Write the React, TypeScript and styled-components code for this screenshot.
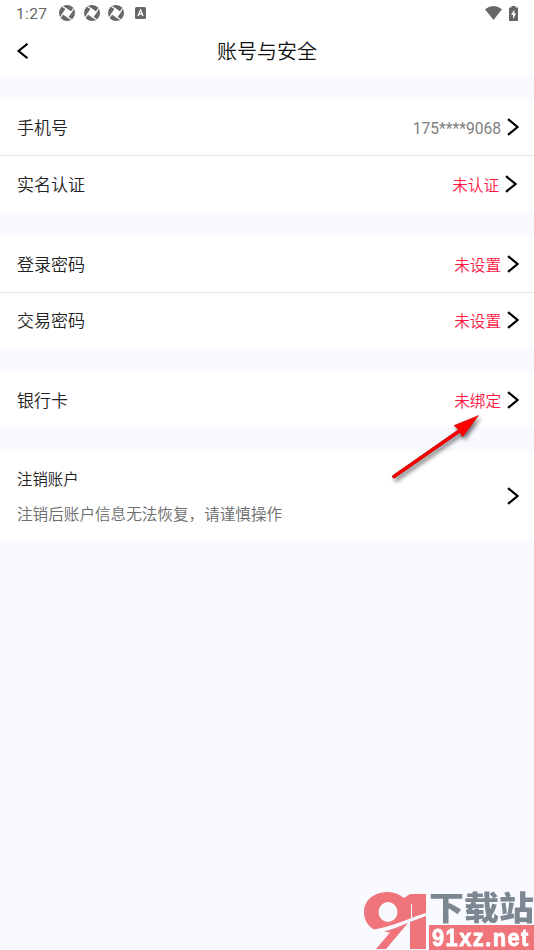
import React from 'react';
import styled, { createGlobalStyle } from 'styled-components';

const GlobalStyle = createGlobalStyle`
  * { box-sizing: border-box; }
  body { margin: 0; background: #f8faff; }
`;

const Screen = styled.div`
  position: relative;
  display: flex;
  flex-direction: column;
  gap: 24px;
  width: 534px;
  height: 950px;
  overflow: hidden;
  background: #f8faff;
  font-family: Roboto, 'Noto Sans CJK SC', sans-serif;
  font-weight: 350;
`;

const Top = styled.header`
  height: 76px;
  margin-bottom: -1px;
  background: #fff;
`;

const StatusBar = styled.div`
  display: flex;
  align-items: center;
  justify-content: space-between;
  height: 27px;
  padding: 0 16px 1px 16px;
  color: #666;
`;

const StatusGroup = styled.div<{ $gap: number }>`
  display: flex;
  align-items: center;
  gap: ${(p) => p.$gap}px;
`;

const Clock = styled.span`
  width: 34.5px;
  padding-top: 2px;
  font-size: 15.5px;
  font-weight: 400;
  letter-spacing: 0.35px;
  line-height: 25px;
`;

const TitleBar = styled.div`
  display: grid;
  grid-template-columns: 48px 1fr 48px;
  align-items: center;
  height: 48px;
`;

const BackButton = styled.button`
  display: flex;
  padding: 0 0 0 16px;
  border: 0;
  background: none;
`;

const Title = styled.h1`
  margin: 0;
  padding-top: 2px;
  color: #111;
  font-size: 20px;
  font-weight: 350;
  line-height: 30px;
  text-align: center;
`;

const Group = styled.section`
  background: #fff;
`;

const Row = styled.div<{ $height: number; $divided?: boolean; $inset?: number }>`
  display: flex;
  align-items: center;
  height: ${(p) => p.$height}px;
  padding: 0 ${(p) => p.$inset ?? 15}px 0 17px;
  border-bottom: ${(p) => (p.$divided ? '1px solid #e4e4e4' : '0')};
`;

const Label = styled.span`
  flex: 1;
  padding-top: 2px;
  color: #222;
  font-size: 17px;
  line-height: 26px;
`;

const Value = styled.span<{ $alert?: boolean }>`
  margin-right: 6px;
  padding-top: 4px;
  color: ${(p) => (p.$alert ? '#ff1744' : '#808080')};
  font-size: 15.6px;
  font-weight: ${(p) => (p.$alert ? 350 : 400)};
  line-height: 24px;
`;

const CloseRow = styled.section`
  display: flex;
  align-items: center;
  height: 89px;
  padding: 0 15px 0 17px;
  background: #fff;
`;

const CloseText = styled.div`
  flex: 1;
  display: flex;
  flex-direction: column;
  gap: 11px;
  padding-top: 4px;
`;

const CloseTitle = styled.span`
  color: #222;
  font-size: 15.4px;
  line-height: 24px;
`;

const CloseHint = styled.span`
  color: #6c6c6c;
  font-size: 15.6px;
  line-height: 24px;
`;

const Pointer = styled.svg`
  position: absolute;
  left: 380px;
  top: 405px;
  filter: drop-shadow(2px 3px 2px rgba(0, 0, 0, 0.55));
`;

const Watermark = styled.div`
  position: absolute;
  right: 0;
  bottom: 0;
  display: flex;
  width: 170px;
  height: 60px;
`;

const Emblem = styled.svg`
  flex: none;
`;

const Brand = styled.div`
  flex: 1;
  min-width: 0;
  display: flex;
  flex-direction: column;
  margin-left: 3px;
`;

const BrandName = styled.div`
  height: 35px;
  color: #7c8791;
  font: 900 33px/32px 'Noto Sans CJK SC', sans-serif;
  white-space: nowrap;
  transform: scaleX(1.06);
  transform-origin: left;
`;

const BrandSite = styled.div`
  height: 25px;
  padding-left: 3px;
  background: #f0757b;
  color: #fff;
  font: 700 24px/25px 'Liberation Sans', sans-serif;
`;

const SiteText = styled.span`
  display: inline-block;
  letter-spacing: 1.6px;
  transform: scaleX(0.91);
  transform-origin: left;
  -webkit-text-stroke: 0.8px #fff;
`;

const Chevron = () => (
  <svg width="12" height="18" viewBox="0 0 12 18" fill="none" stroke="#000" strokeWidth="2.2">
    <path d="M1 1.2 10.500 9 1 16.800" />
  </svg>
);

const Aperture = () => (
  <svg width="16" height="16" viewBox="0 0 16 16">
    <circle cx="8" cy="8" r="8" fill="#686868" />
    <path d="M7 3 13 7 9 13 3 9Z" fill="#fff" />
    <path d="M7.500 4 3.500 1.500M12 7.500 14.500 3.500M8.500 12 12.500 14.500M4 8.500 1.500 12.500" stroke="#fff" strokeWidth="1.3" />
  </svg>
);

interface Item {
  label: string;
  value: string;
  alert?: boolean;
  inset?: number;
  height: number;
}

const groups: Item[][] = [
  [
    { label: '手机号', value: '175****9068', height: 57 },
    { label: '实名认证', value: '未认证', alert: true, inset: 17, height: 56 },
  ],
  [
    { label: '登录密码', value: '未设置', alert: true, height: 56.5 },
    { label: '交易密码', value: '未设置', alert: true, height: 55.5 },
  ],
  [{ label: '银行卡', value: '未绑定', alert: true, height: 55 }],
];

export default function App() {
  return (
    <Screen>
      <GlobalStyle />
      <Top>
        <StatusBar>
          <StatusGroup $gap={8.5}>
            <Clock>1:27</Clock>
            <Aperture />
            <Aperture />
            <Aperture />
            <svg width="14" height="12" viewBox="0 0 14 12">
              <rect x="2" width="11" height="12" rx="1.5" fill="#666" />
              <path d="M5 9 7.5 3 10 9M6 7h3" stroke="#fff" strokeWidth="1.3" fill="none" />
            </svg>
          </StatusGroup>
          <StatusGroup $gap={7}>
            <svg width="17" height="14" viewBox="0 0 17 14">
              <path d="M0 3.2Q8.5-3 17 3.2L8.5 14Z" fill="#666" />
            </svg>
            <svg width="9" height="15" viewBox="0 0 9 15">
              <path d="M2.5 0h4v1.5H9V15H0V1.5h2.5Z" fill="#666" />
              <path d="M5.5 3.5 2 8.7h2v4l3.2-5.2h-2Z" fill="#fff" />
            </svg>
          </StatusGroup>
        </StatusBar>
        <TitleBar>
          <BackButton aria-label="返回">
            <svg width="12" height="16" viewBox="0 0 12 16" fill="none" stroke="#000" strokeWidth="2.1">
              <path d="M11.500 .8 2.500 8l9 7.2" />
            </svg>
          </BackButton>
          <Title>账号与安全</Title>
        </TitleBar>
      </Top>
      {groups.map((items) => (
        <Group key={items[0].label}>
          {items.map((item, i) => (
            <Row
              key={item.label}
              $height={item.height}
              $divided={i < items.length - 1}
              $inset={item.inset}
            >
              <Label>{item.label}</Label>
              <Value $alert={item.alert}>{item.value}</Value>
              <Chevron />
            </Row>
          ))}
        </Group>
      ))}
      <CloseRow>
        <CloseText>
          <CloseTitle>注销账户</CloseTitle>
          <CloseHint>注销后账户信息无法恢复，请谨慎操作</CloseHint>
        </CloseText>
        <Chevron />
      </CloseRow>
      <Pointer width="110" height="85" viewBox="0 0 110 85">
        <path d="M14 71.500 80 25.500" stroke="#8f1010" strokeWidth="3.6" strokeLinecap="round" />
        <path d="M98.500 10.500 74 20.500 78.500 25 82.500 32Z" fill="#f00" stroke="#c00808" strokeWidth=".5" />
        <path d="M14 71.500 80 25.500" stroke="#f00" strokeWidth="2.8" strokeLinecap="round" />
      </Pointer>
      <Watermark>
        <Emblem width="62" height="60" viewBox="0 0 62 60" fill="#f0757b">
          <path
            fillRule="evenodd"
            d="M24 2C9 2 0 11 0 22c0 8 4 14 10 17.500C27 37 40 30 62 23V4H46L40 8Q33 2 24 2ZM24 12a9.500 10 0 1 0 0 20a9.500 10 0 1 0 0-20Z"
          />
          <path d="M20 41.500C30 39 36 36 44 33L22 59H12L26 42.500ZM46 32 62 26V59H46Z" />
          <path d="M47.500 14v14" stroke="#f8faff" strokeWidth="1" />
        </Emblem>
        <Brand>
          <BrandName>下载站</BrandName>
          <BrandSite>
            <SiteText>91xz.net</SiteText>
          </BrandSite>
        </Brand>
      </Watermark>
    </Screen>
  );
}
